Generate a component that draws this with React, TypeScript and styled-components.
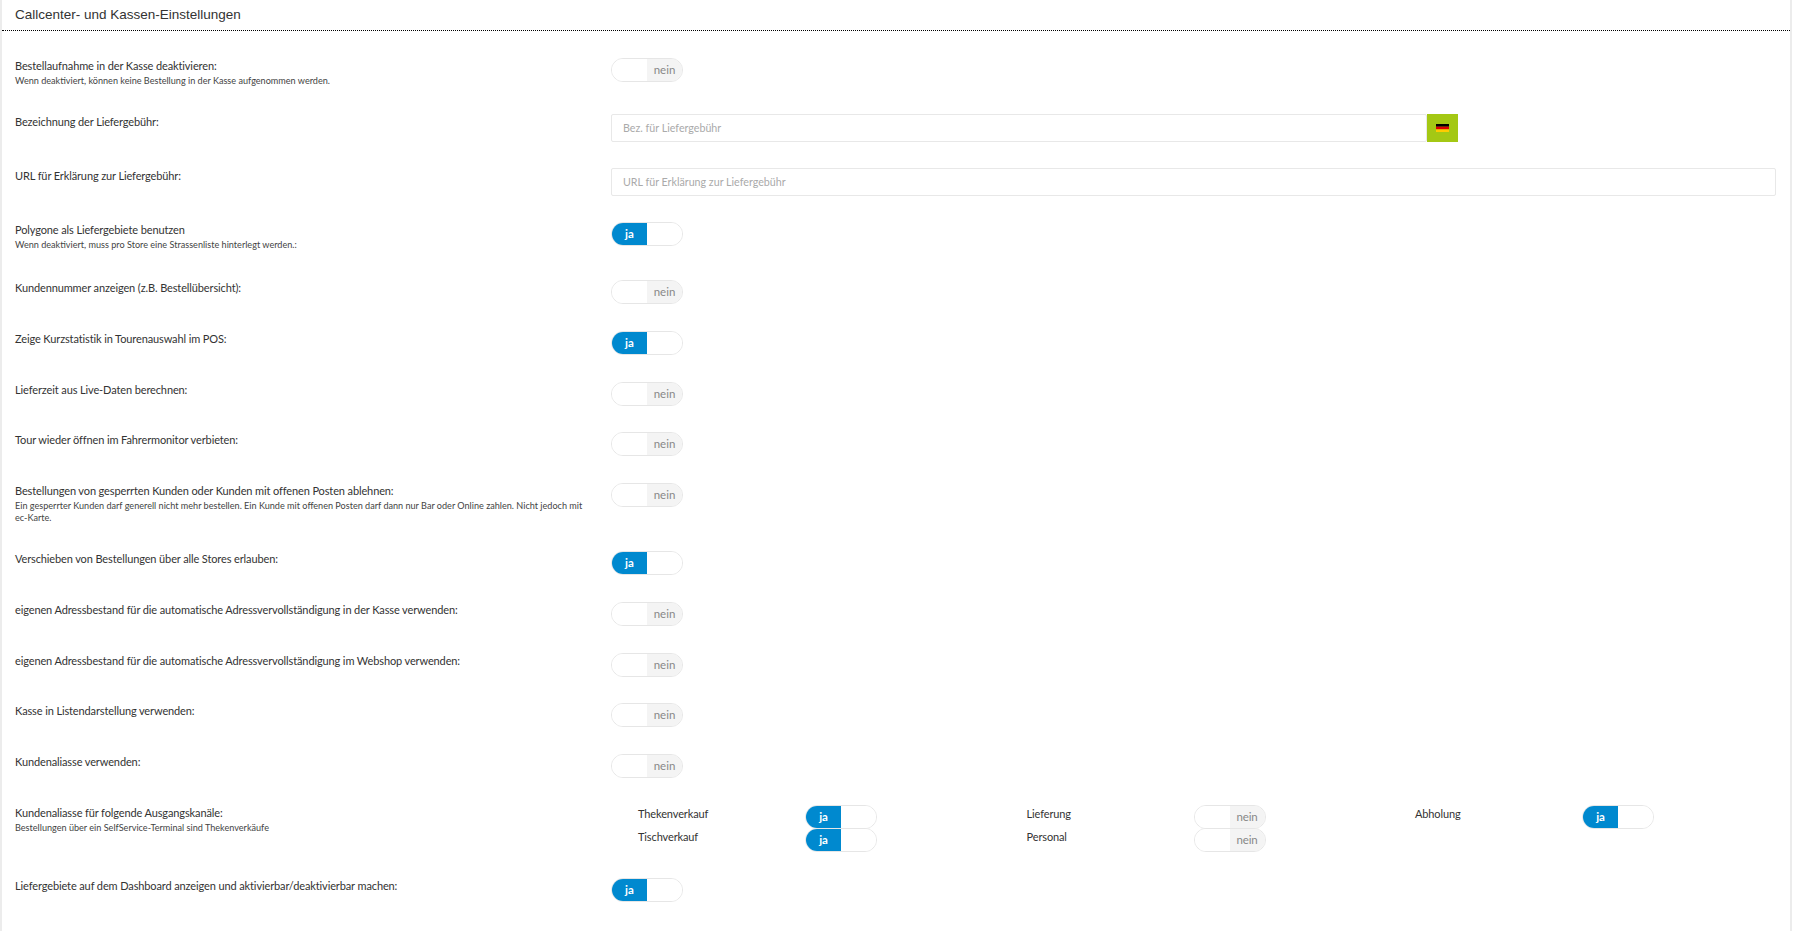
import React from 'react';
import styled, { createGlobalStyle } from 'styled-components';

const GlobalStyle = createGlobalStyle`
  html, body {
    margin: 0;
    padding: 0;
    background: #fff;
    font-family: 'Lato', sans-serif;
    color: #333;
  }
`;

const Panel = styled.div`
  box-sizing: border-box;
  width: 1792px;
  height: 931px;
  overflow: hidden;
  border-left: 2px solid #ececec;
  border-right: 2px solid #ececec;
`;

const Header = styled.div`
  box-sizing: border-box;
  height: 31px;
  border-bottom: 1px dotted #000;
  padding-left: 13px;
  font-family: 'Liberation Sans', Arial, sans-serif;
  font-size: 13.5px;
  line-height: 29px;
  color: #333;
`;

const Body = styled.div`
  padding: 27px 14px 0 13px;
`;

const Row = styled.div<{ $gap?: number }>`
  display: flex;
  align-items: flex-start;
  margin-bottom: ${p => p.$gap ?? 26.67}px;
`;

const LabelCol = styled.div`
  flex: 0 0 596px;
  padding-right: 24px;
  box-sizing: border-box;
`;

const Label = styled.div`
  font-size: 11px;
  letter-spacing: -0.12px;
  line-height: 15px;
  padding-bottom: 2px;
  color: #333;
`;

const Help = styled.div`
  font-size: 9.1px;
  line-height: 12.33px;
  color: #444;
`;

const ControlCol = styled.div`
  flex: 1;
  min-width: 0;
`;

const SwitchBox = styled.div`
  box-sizing: border-box;
  display: flex;
  width: 72px;
  height: 24px;
  border: 1px solid #e6e6e6;
  border-radius: 12px;
  overflow: hidden;
  background: #fff;
`;

const SwitchPart = styled.div<{ $on?: boolean; $off?: boolean }>`
  flex: 1;
  font-size: 11.5px;
  line-height: 22px;
  text-align: center;
  background: ${p => (p.$on ? '#0089cf' : p.$off ? '#f4f4f4' : '#fff')};
  color: ${p => (p.$on ? '#fff' : '#888')};
  font-weight: ${p => (p.$on ? 700 : 400)};
`;

const InputGroup = styled.div<{ $full?: boolean }>`
  display: flex;
  width: ${p => (p.$full ? '100%' : '847px')};
`;

const TextInput = styled.input`
  box-sizing: border-box;
  flex: 1;
  min-width: 0;
  height: 28px;
  padding: 0 11px;
  border: 1px solid #e8e8e8;
  border-radius: 2px;
  font-family: 'Lato', sans-serif;
  font-size: 10.7px;
  color: #333;
  outline: none;

  &::placeholder {
    color: #aaa;
    opacity: 1;
  }
`;

const FlagButton = styled.div`
  flex: 0 0 31px;
  height: 28px;
  display: flex;
  align-items: center;
  justify-content: center;
  background: #a4c814;
`;

const ChannelGrid = styled.div`
  display: grid;
  grid-template-columns: repeat(3, 388.5px);
  grid-auto-rows: 23.67px;
  padding-left: 27px;
`;

const Channel = styled.div`
  display: grid;
  grid-template-columns: 167px 72px;
  font-size: 11px;
  letter-spacing: -0.12px;
  line-height: 17px;
  color: #333;
`;

const Flag = () => (
  <svg width="13" height="8" viewBox="0 0 13 8">
    <rect width="13" height="2.7" fill="#000" />
    <rect y="2.7" width="13" height="2.7" fill="#d00" />
    <rect y="5.4" width="13" height="2.6" fill="#fc0" />
  </svg>
);

const Switch: React.FC<{ on: boolean }> = ({ on }) => (
  <SwitchBox>
    {on ? <SwitchPart $on>ja</SwitchPart> : <SwitchPart />}
    {on ? <SwitchPart /> : <SwitchPart $off>nein</SwitchPart>}
  </SwitchBox>
);

interface Setting {
  label: string;
  help?: string;
  on: boolean;
  gap?: number;
}

const TOP: Setting[] = [
  { label: 'Polygone als Liefergebiete benutzen', help: 'Wenn deaktiviert, muss pro Store eine Strassenliste hinterlegt werden.:', on: true, gap: 28.67 },
  { label: 'Kundennummer anzeigen (z.B. Bestellübersicht):', on: false },
  { label: 'Zeige Kurzstatistik in Tourenauswahl im POS:', on: true },
  { label: 'Lieferzeit aus Live-Daten berechnen:', on: false },
  { label: 'Tour wieder öffnen im Fahrermonitor verbieten:', on: false },
  {
    label: 'Bestellungen von gesperrten Kunden oder Kunden mit offenen Posten ablehnen:',
    help: 'Ein gesperrter Kunden darf generell nicht mehr bestellen. Ein Kunde mit offenen Posten darf dann nur Bar oder Online zahlen. Nicht jedoch mit ec-Karte.',
    on: false,
  },
  { label: 'Verschieben von Bestellungen über alle Stores erlauben:', on: true },
  { label: 'eigenen Adressbestand für die automatische Adressvervollständigung in der Kasse verwenden:', on: false },
  { label: 'eigenen Adressbestand für die automatische Adressvervollständigung im Webshop verwenden:', on: false },
  { label: 'Kasse in Listendarstellung verwenden:', on: false },
  { label: 'Kundenaliasse verwenden:', on: false },
];

const CHANNELS = [
  { name: 'Thekenverkauf', on: true },
  { name: 'Lieferung', on: false },
  { name: 'Abholung', on: true },
  { name: 'Tischverkauf', on: true },
  { name: 'Personal', on: false },
];

const SettingRow: React.FC<Setting> = ({ label, help, on, gap }) => (
  <Row $gap={gap}>
    <LabelCol>
      <Label>{label}</Label>
      {help && <Help>{help}</Help>}
    </LabelCol>
    <ControlCol>
      <Switch on={on} />
    </ControlCol>
  </Row>
);

export default function App() {
  return (
    <Panel>
      <GlobalStyle />
      <Header>Callcenter- und Kassen-Einstellungen</Header>
      <Body>
        <SettingRow
          label="Bestellaufnahme in der Kasse deaktivieren:"
          help="Wenn deaktiviert, können keine Bestellung in der Kasse aufgenommen werden."
          on={false}
        />
        <Row $gap={26}>
          <LabelCol>
            <Label>Bezeichnung der Liefergebühr:</Label>
          </LabelCol>
          <ControlCol>
            <InputGroup>
              <TextInput placeholder="Bez. für Liefergebühr" />
              <FlagButton>
                <Flag />
              </FlagButton>
            </InputGroup>
          </ControlCol>
        </Row>
        <Row $gap={26.33}>
          <LabelCol>
            <Label>URL für Erklärung zur Liefergebühr:</Label>
          </LabelCol>
          <ControlCol>
            <InputGroup $full>
              <TextInput placeholder="URL für Erklärung zur Liefergebühr" />
            </InputGroup>
          </ControlCol>
        </Row>
        {TOP.map(s => (
          <SettingRow key={s.label} {...s} />
        ))}
        <Row>
          <LabelCol>
            <Label>Kundenaliasse für folgende Ausgangskanäle:</Label>
            <Help>Bestellungen über ein SelfService-Terminal sind Thekenverkäufe</Help>
          </LabelCol>
          <ControlCol>
            <ChannelGrid>
              {CHANNELS.map(c => (
                <Channel key={c.name}>
                  <span>{c.name}</span>
                  <Switch on={c.on} />
                </Channel>
              ))}
            </ChannelGrid>
          </ControlCol>
        </Row>
        <SettingRow label="Liefergebiete auf dem Dashboard anzeigen und aktivierbar/deaktivierbar machen:" on />
      </Body>
    </Panel>
  );
}
